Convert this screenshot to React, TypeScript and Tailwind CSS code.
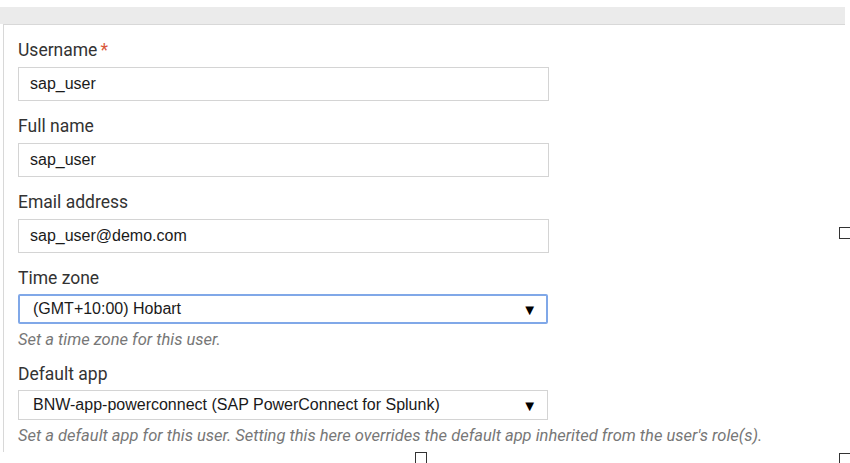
import type { ReactNode } from "react";

const labelFont = { fontFamily: "Roboto, 'Liberation Sans', sans-serif" };

function Label({ children, required }: { children: ReactNode; required?: boolean }) {
  return (
    <div className="h-[20px] text-[17.5px] leading-[20px] text-[#333]" style={labelFont}>
      {children}
      {required && <span className="ml-[3px] text-[#d9583b]">*</span>}
    </div>
  );
}

function TextInput({ value }: { value: string }) {
  return (
    <div className="mt-[7px] flex h-[34px] w-[531px] items-center border border-[#d4d4d4] bg-white px-[11px] font-['Liberation_Sans',Arial,sans-serif] text-[16px] text-[#1a1a1a]">
      {value}
    </div>
  );
}

function Select({ value, focused }: { value: string; focused?: boolean }) {
  return (
    <div
      className={
        focused
          ? "mt-[6px] flex h-[30px] w-[530px] items-center justify-between rounded-[2px] border-2 border-[#80a8e8] bg-white pl-[13px] pr-[9px] font-['Liberation_Sans',Arial,sans-serif] text-[16px] text-[#1a1a1a]"
          : "mt-[6px] flex h-[30px] w-[530px] items-center justify-between border border-[#d4d4d4] bg-white pl-[14px] pr-[10px] font-['Liberation_Sans',Arial,sans-serif] text-[16px] text-[#1a1a1a]"
      }
    >
      <span>{value}</span>
      <span className="text-[15px] leading-none text-black">▼</span>
    </div>
  );
}

function Help({ children }: { children: ReactNode }) {
  return (
    <div className="mt-[7px] h-[18px] text-[16.5px] italic leading-[18px] text-[#777]" style={labelFont}>
      {children}
    </div>
  );
}

export default function App() {
  const fields = [
    { label: "Username", value: "sap_user", required: true },
    { label: "Full name", value: "sap_user" },
    { label: "Email address", value: "sap_user@demo.com" },
  ];

  return (
    <div className="relative h-[463px] w-[850px] overflow-hidden bg-white">
      <div className="h-[7px]" />
      <div className="h-[17px] w-[845px] bg-[#ebebeb]" />
      <div className="ml-[3px] h-[428px] w-[842px] border-l border-t border-[#d8d8d8] bg-white pl-[14px] pt-[15px]">
        {fields.map((f) => (
          <div key={f.label} className="mb-[15px]">
            <Label required={f.required}>{f.label}</Label>
            <TextInput value={f.value} />
          </div>
        ))}
        <div>
          <Label>Time zone</Label>
          <Select value="(GMT+10:00) Hobart" focused />
          <Help>Set a time zone for this user.</Help>
        </div>
        <div className="mt-[15px]">
          <Label>Default app</Label>
          <Select value="BNW-app-powerconnect (SAP PowerConnect for Splunk)" />
          <Help>
            Set a default app for this user. Setting this here overrides the default app inherited from the
            user's role(s).
          </Help>
        </div>
      </div>

      {/* stray checkbox edges */}
      <div className="absolute left-[839px] top-[227px] h-[12px] w-[14px] border border-[#333]" />
      <div className="absolute left-[415px] top-[452px] h-[14px] w-[12px] border border-[#333]" />
      <div className="absolute left-[839px] top-[453px] h-[14px] w-[14px] border border-[#333]" />
    </div>
  );
}
